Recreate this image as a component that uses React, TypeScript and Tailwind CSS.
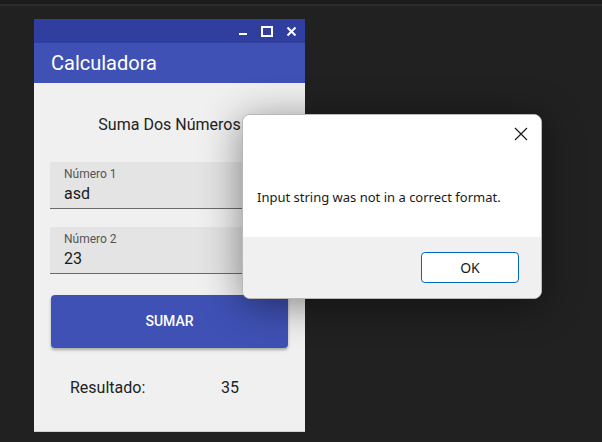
export default function App() {
  return (
    <div className="relative h-[442px] w-[602px] overflow-hidden bg-[#212121] font-['Roboto',sans-serif]">
      <div className="h-[4px] bg-[#1b1b1b]" />
      <div className="h-[2px] bg-[#2a2a2a]" />

      {/* app window */}
      <div className="ml-[34px] mt-[13px] flex w-[271px] flex-col border-b border-[#cfcfcf]">
        <div className="flex h-[24px] items-center justify-end gap-[13px] bg-[#303f9f] pr-[8px]">
          <svg width="10" height="10" viewBox="0 0 10 10">
            <rect x="1" y="7" width="8" height="2" fill="#fff" />
          </svg>
          <svg width="12" height="11" viewBox="0 0 12 11">
            <rect x="1" y="1" width="10" height="9" fill="none" stroke="#fff" strokeWidth="2" />
          </svg>
          <svg width="11" height="11" viewBox="0 0 11 11">
            <path d="M1.5 1.5 L9.5 9.5 M9.5 1.5 L1.5 9.5" stroke="#fff" strokeWidth="2" />
          </svg>
        </div>
        <div className="flex h-[40px] items-center bg-[#3f51b5] pl-[17px] text-[20px] text-white">
          Calculadora
        </div>
        <div className="flex h-[348px] flex-col bg-[#f0f0f0] px-4">
          <p className="mt-[33px] text-center text-[16px] leading-[18px] text-[#222]">Suma Dos Números</p>

          <div className="mt-[28px] flex h-[47px] flex-col border-b border-[#6b6b6b] bg-[#e4e4e4] px-[14px] pt-[5px]">
            <span className="text-[12px] leading-[14px] text-[#555]">Número 1</span>
            <span className="mt-[3px] text-[16px] leading-[20px] text-[#1a1a1a]">asd</span>
          </div>

          <div className="mt-[18px] flex h-[47px] flex-col border-b border-[#6b6b6b] bg-[#e4e4e4] px-[14px] pt-[5px]">
            <span className="text-[12px] leading-[14px] text-[#555]">Número 2</span>
            <span className="mt-[3px] text-[16px] leading-[20px] text-[#1a1a1a]">23</span>
          </div>

          <button className="mx-[1px] mt-[21px] flex h-[53px] items-center justify-center rounded-[4px] bg-[#3f51b5] text-[14px] font-medium text-white shadow-[0_2px_3px_rgba(0,0,0,0.3)]">
            SUMAR
          </button>

          <div className="mt-[31px] flex text-[16px] leading-[18px] text-[#222]">
            <span className="ml-[20px] w-[151px]">Resultado:</span>
            <span>35</span>
          </div>
        </div>
      </div>

      {/* message box */}
      <div className="absolute left-[242px] top-[114px] flex h-[185px] w-[300px] flex-col overflow-hidden rounded-[8px] border border-[#b8b8b8] bg-white font-['Noto_Sans',sans-serif] shadow-[0_6px_40px_rgba(0,0,0,0.45)]">
        <div className="flex h-[122px] flex-col bg-white">
          <div className="flex justify-end pr-[13px] pt-[12px]">
            <svg width="14" height="14" viewBox="0 0 14 14">
              <path d="M1 1 L13 13 M13 1 L1 13" stroke="#1a1a1a" strokeWidth="1.2" />
            </svg>
          </div>
          <p className="ml-[14px] mt-[47px] text-[13px] leading-[18px] text-[#1a1a1a]">
            Input string was not in a correct format.
          </p>
        </div>
        <div className="flex flex-1 items-start justify-end bg-[#f0f0f0] pr-[22px] pt-[15px]">
          <button className="flex h-[31px] w-[98px] items-center justify-center rounded-[4px] border border-[#0067c0] bg-white text-[14px] text-[#1a1a1a]">
            OK
          </button>
        </div>
      </div>
    </div>
  );
}
